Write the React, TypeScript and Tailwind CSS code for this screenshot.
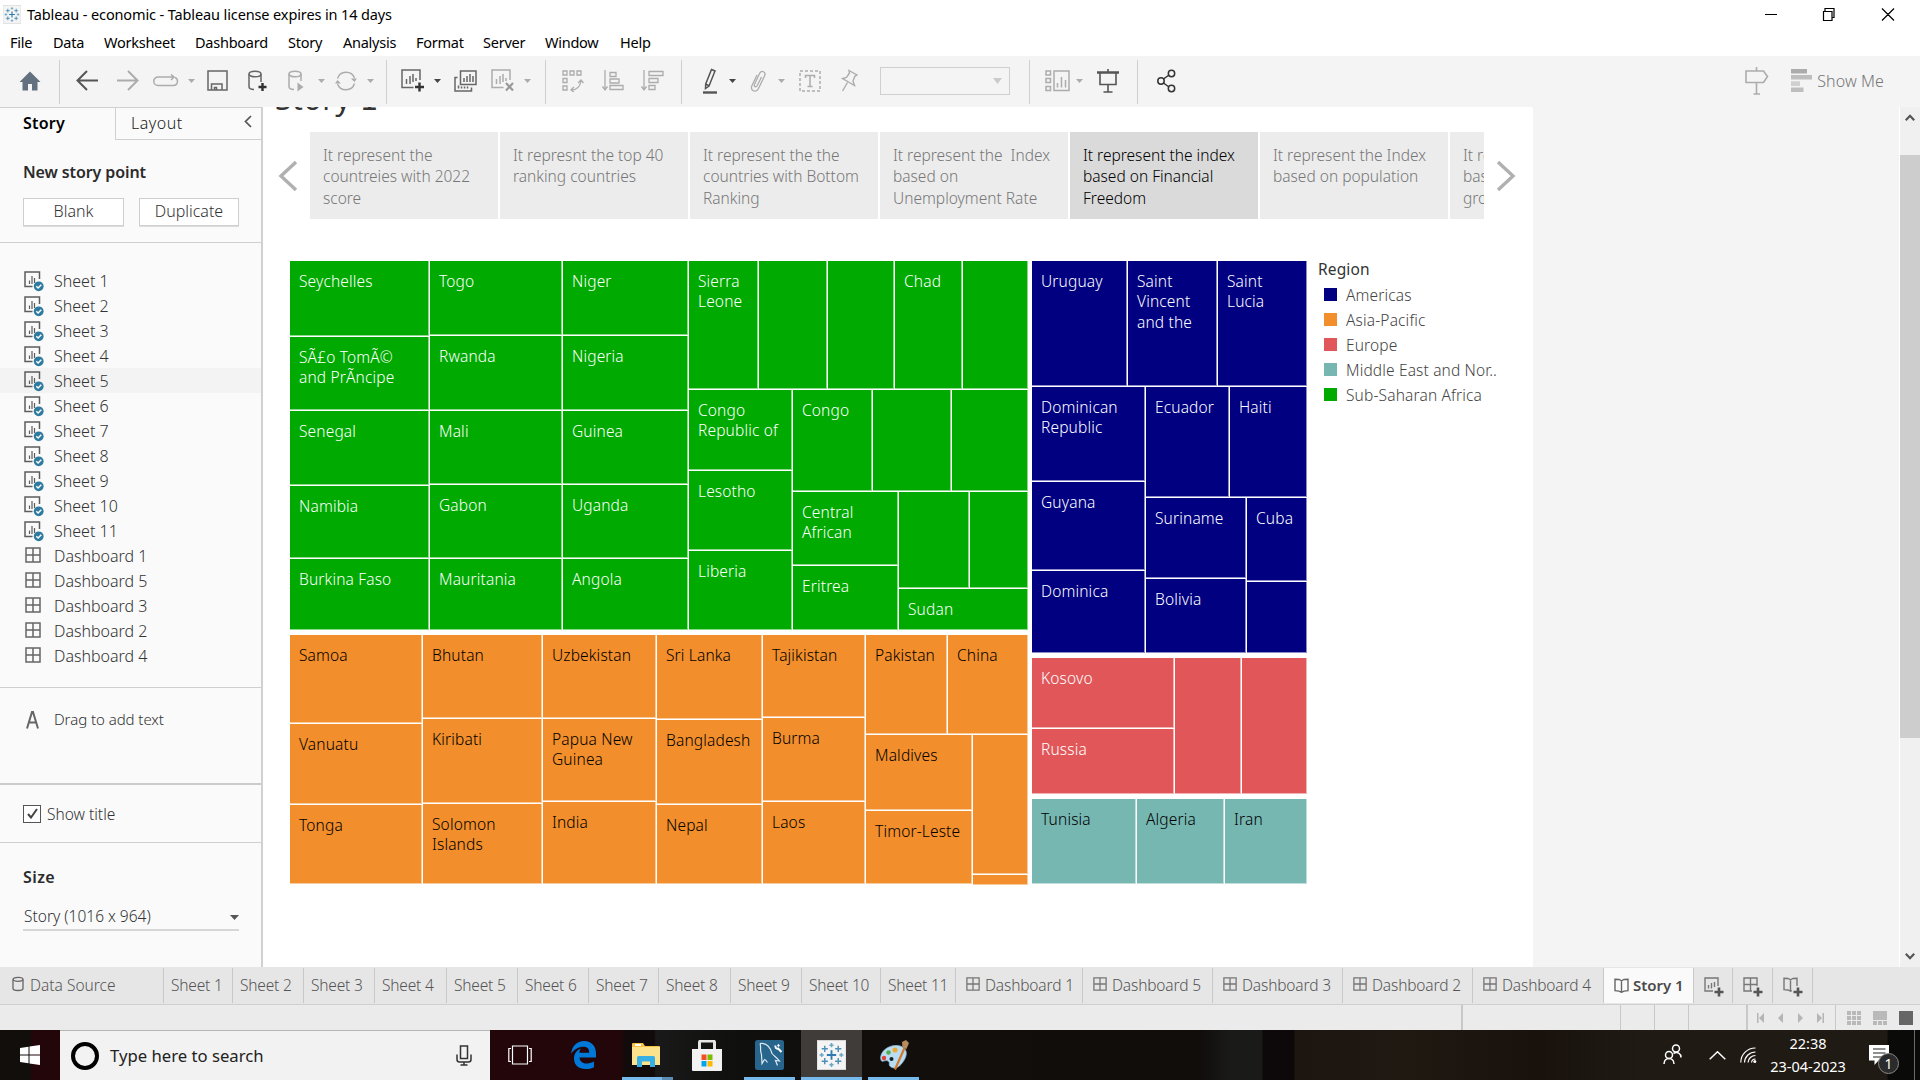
import React from "react";

type Leaf = { s: number; t?: string };
type Branch = { s: number; d: "row" | "col"; c: Node[] };
type Node = Leaf | Branch;

const col = (s: number, c: Node[]): Branch => ({ s, d: "col", c });
const row = (s: number, c: Node[]): Branch => ({ s, d: "row", c });
const l = (s: number, t?: string): Leaf => ({ s, t });

const africa: Node = row(370, [
  col(140, [l(76, "Seychelles"), l(74, "SÃ£o TomÃ©\nand PrÃ­ncipe"), l(75, "Senegal"), l(73, "Namibia"), l(72, "Burkina Faso")]),
  col(133, [l(75, "Togo"), l(75, "Rwanda"), l(74, "Mali"), l(74, "Gabon"), l(72, "Mauritania")]),
  col(126, [l(75, "Niger"), l(75, "Nigeria"), l(74, "Guinea"), l(74, "Uganda"), l(72, "Angola")]),
  col(340, [
    row(129, [l(70, "Sierra\nLeone"), l(69), l(67, ""), l(68, "Chad"), l(66)]),
    row(241, [
      col(104, [l(81, "Congo\nRepublic of"), l(80, "Lesotho"), l(80, "Liberia")]),
      col(236, [
        row(102, [l(80, "Congo"), l(79), l(77)]),
        row(139, [
          col(106, [l(74, "Central\nAfrican"), l(65, "Eritrea")]),
          col(130, [row(97, [l(71), l(59)]), l(42, "Sudan")]),
        ]),
      ]),
    ]),
  ]),
]);

const asia: Node = row(250, [
  col(133, [l(89, "Samoa"), l(81, "Vanuatu"), l(80, "Tonga")]),
  col(120, [l(84, "Bhutan"), l(85, "Kiribati"), l(81, "Solomon\nIslands")]),
  col(114, [l(84, "Uzbekistan"), l(83, "Papua New\nGuinea"), l(83, "India")]),
  col(106, [l(85, "Sri Lanka"), l(85, "Bangladesh"), l(80, "Nepal")]),
  col(103, [l(83, "Tajikistan"), l(84, "Burma"), l(83, "Laos")]),
  col(163, [
    row(100, [l(82, "Pakistan"), l(81, "China")]),
    row(150, [col(107, [l(76, "Maldives"), l(74, "Timor-Leste")]), col(56, [l(140), l(10)])]),
  ]),
]);

const americas: Node = col(393, [
  row(126, [l(96, "Uruguay"), l(90, "Saint\nVincent\nand the"), l(90, "Saint\nLucia")]),
  row(267, [
    col(114, [l(95, "Dominican\nRepublic"), l(89, "Guyana"), l(83, "Dominica")]),
    col(162, [
      row(111, [l(84, "Ecuador"), l(78, "Haiti")]),
      row(156, [col(101, [l(81, "Suriname"), l(75, "Bolivia")]), col(61, [l(84, "Cuba"), l(72)])]),
    ]),
  ]),
]);

const europe: Node = row(137, [col(143, [l(71, "Kosovo"), l(66, "Russia")]), l(67), l(66)]);
const mena: Node = row(86, [l(105, "Tunisia"), l(88, "Algeria"), l(83, "Iran")]);

function Tree({ n, parent, fill }: { n: Node; parent: "row" | "col"; fill: string }) {
  const style = parent === "row" ? { width: n.s } : { height: n.s };
  if ("c" in n) {
    return (
      <div className={`flex shrink-0 ${n.d === "row" ? "flex-row" : "flex-col"}`} style={style}>
        {n.c.map((c, i) => (
          <Tree key={i} n={c} parent={n.d} fill={fill} />
        ))}
      </div>
    );
  }
  return (
    <div
      className={`shrink-0 overflow-hidden whitespace-pre border-t border-l border-white pt-[10px] pl-[9px] text-[15.5px] leading-[20.3px] tracking-[0.15px] shadow-[inset_-1px_-1px_0_rgba(255,255,255,0.55)] ${fill}`}
      style={style}
    >
      {n.t}
    </div>
  );
}

function Ico({ w, h, c, children, vb }: { w: number; h: number; c?: string; children: React.ReactNode; vb?: string }) {
  return (
    <svg width={w} height={h} viewBox={vb ?? `0 0 ${w} ${h}`} fill="none" stroke="currentColor" strokeWidth={1.5} className={`shrink-0 ${c ?? ""}`}>
      {children}
    </svg>
  );
}

const Caret = ({ c }: { c: string }) => (
  <Ico w={7} h={4} c={c}>
    <path d="M0 0h7L3.5 4z" fill="currentColor" stroke="none" />
  </Ico>
);
const VLine = ({ c }: { c: string }) => <div className={`mt-[2px] h-[44px] w-px shrink-0 bg-[#cfcfcf] ${c}`} />;

const SheetIcon = () => (
  <Ico w={20} h={21} c="mt-px text-[#5c5c5c]">
    <path d="M8.5 15.5H1V1h14.5v7" />
    <path d="M5.5 9.5V13M8 5v8M10.5 7v5" strokeWidth={1.2} />
    <circle cx="14.7" cy="15.3" r="4.9" fill="#2e7b9f" stroke="none" />
    <path d="M12.3 15.3l1.8 1.8 3.2-3.4" stroke="#fff" strokeWidth={1.4} />
  </Ico>
);
const DashIcon = ({ s, c }: { s: number; c?: string }) => (
  <Ico w={s} h={s} vb="0 0 16 16" c={c ?? "text-[#666]"}>
    <path d="M1 1h14v14H1zM8 1v14M1 8h14" />
  </Ico>
);
const BookIcon = ({ c }: { c?: string }) => (
  <Ico w={15} h={15} c={c ?? "text-[#666]"}>
    <path d="M1 1.2l4 .3 2.5 1.3L10 1.5l4-.3v11.5l-4 .4-2.5 1.2L5 13.1l-4-.4zM7.5 2.8v11.4" strokeWidth={1.4} />
  </Ico>
);

function Toolbar() {
  return (
    <div className="flex h-[51px] items-center bg-[#f4f4f4] pb-[2px] text-[#acacac]">
      <Ico w={22} h={20} c="ml-[19px] text-[#63707f]">
        <path d="M11 .5L21.5 11H18.5V19.5H13V13H9V19.5H3.5V11H.5z" fill="currentColor" stroke="none" />
      </Ico>
      <VLine c="ml-[18px]" />
      <Ico w={22} h={21} c="ml-[16px] text-[#555]">
        <path d="M11 1L1.5 10.5 11 20M1.5 10.5H22" strokeWidth={2} />
      </Ico>
      <Ico w={22} h={21} c="ml-[19px]">
        <path d="M11 1l9.5 9.5L11 20M20.5 10.5H0" strokeWidth={2} />
      </Ico>
      <Ico w={26} h={14} c="ml-[14px]">
        <path d="M20 3H5a4.2 4.2 0 000 8.5h15c3 0 4.5-2 4.5-4.2S23.5 4 22 3.5M18 .5L21 3l-3 3" />
      </Ico>
      <Caret c="ml-[9px]" />
      <Ico w={21} h={21} c="ml-[12px] text-[#666]">
        <path d="M1 1h19v19H1zM4.500 20v-6h10.500v6M7.500 20v-2.500h2V20" />
      </Ico>
      <Ico w={19} h={22} c="ml-[20px] text-[#666]">
        <path d="M1 4v12.500c0 2 2 3 5 3M13 4v8" />
        <ellipse cx="7" cy="4" rx="6" ry="2.8" />
        <path d="M14.500 13v8M10.500 17h8" stroke="#333" strokeWidth={2.4} />
      </Ico>
      <Ico w={17} h={22} c="ml-[21px]">
        <path d="M1 4v12.500c0 2 2 3 5 3M13 4v7" />
        <ellipse cx="7" cy="4" rx="6" ry="2.8" />
        <path d="M9.500 12.500L15.500 17l-6 4.500z" fill="currentColor" stroke="none" />
      </Ico>
      <Caret c="ml-[13px]" />
      <Ico w={22} h={22} c="ml-[10px]">
        <path d="M2.500 8.500A9 9 0 0119.500 8M19.500 13.500A9 9 0 012.500 14" />
        <path d="M16 8.500h6l-2.500 3.500zM0 13.500h6L2.500 10z" fill="currentColor" stroke="none" />
      </Ico>
      <Caret c="ml-[10px]" />
      <VLine c="ml-[12px]" />
      <Ico w={23} h={23} c="ml-[14px] text-[#666]">
        <path d="M12.500 18.500H1V1h18v10" />
        <path d="M5.500 10v5M9 7v8M12 5v8M15 9v3" />
        <path d="M18.500 13.500v9M14 18h9" stroke="#333" strokeWidth={2.4} />
      </Ico>
      <Caret c="ml-[10px] text-[#444]" />
      <Ico w={23} h={22} c="ml-[13px] text-[#666]">
        <path d="M6.500 1H22v13.500H6.500zM3.500 7.500H1V21h16.500v-3.500" />
        <path d="M10 8v4M13 6v6M16 4v8M19 6v6M4.500 15.500v3M7.500 16.500v2M10.500 16.500v2M13.500 16.500v2" />
      </Ico>
      <Ico w={23} h={23} c="ml-[14px]">
        <path d="M12.500 18.500H1V1h18v10" />
        <path d="M5.500 10v5M9 7v8M12 5v8M15 9v3" />
        <path d="M15 14l7 7.500M22 14l-7 7.500" stroke="#999" strokeWidth={2.2} />
      </Ico>
      <Caret c="ml-[10px]" />
      <VLine c="ml-[14px]" />
      <Ico w={22} h={22} c="ml-[16px]">
        <path d="M1 1h4v4H1zM8 1h4v4H8zM15 1h4v4h-4zM1 8.500h4v4H1zM1 16h4v4H1zM9 20c6 0 9-3 10-9M16 13l3-3 2.500 3M12 17l-3 3 3 2" strokeWidth={1.3} />
      </Ico>
      <Ico w={22} h={22} c="ml-[18px]">
        <path d="M3 0v19M.5 16.500L3 20l2.500-3.500M8 2.500h6v4H8zM8 9h9v4H8zM8 15.500h13v4H8z" strokeWidth={1.3} />
      </Ico>
      <Ico w={23} h={22} c="ml-[17px]">
        <path d="M3 0v19M.5 16.500L3 20l2.500-3.500M8 1.500h14v4H8zM8 8.500h9v4H8zM8 15.500h6v4H8z" strokeWidth={1.3} />
      </Ico>
      <VLine c="ml-[17px]" />
      <Ico w={16} h={26} c="ml-[20px] text-[#555]">
        <path d="M9.500 1.500l3.500 1.500-6 15-3.500 2.500.2-4.500zM3.500 16l3 1.500" />
        <path d="M1 24.500h14" strokeWidth={2.4} />
      </Ico>
      <Caret c="ml-[11px] text-[#444]" />
      <Ico w={16} h={24} c="ml-[14px]">
        <path d="M11.500 8l-4.500 9c-1 1.500-3.500.5-2.500-1.500L9.500 4.500c2-4 7-1.500 5 2.500l-6 12.500c-2.500 5-9 2-6.500-3L7 6" strokeWidth={1.3} />
      </Ico>
      <Caret c="ml-[12px]" />
      <Ico w={22} h={22} c="ml-[14px]">
        <path d="M1 1h20v20H1z" strokeDasharray="3 2" />
        <path d="M6.500 8V5.500h9V8M11 5.500v11M8.500 16.500h5" />
      </Ico>
      <Ico w={17} h={24} c="ml-[20px]">
        <path d="M8 1.500l8 4.500-2 1-2 5 1.500 4.500-6-3.500-6-3.500 4-1L8.500 4zM6.500 13.500L1.500 22" strokeWidth={1.4} />
      </Ico>
      <div className="ml-[22px] flex h-[28px] w-[130px] shrink-0 items-center justify-end border border-[#cfcfcf] pr-[7px] text-[#cbcbcb]">
        <Ico w={9} h={6}>
          <path d="M0 0h9L4.500 6z" fill="currentColor" stroke="none" />
        </Ico>
      </div>
      <VLine c="ml-[19px]" />
      <Ico w={25} h={22} c="ml-[15px]">
        <path d="M1 1h4.500v4H1zM1 8.500h4.500v4H1zM1 16.500h4.500v4H1zM9 1h15v19.500H9z" />
        <path d="M12.500 13v4.500M16.500 7v10.500M20.500 10v7.500" />
      </Ico>
      <Caret c="ml-[6px]" />
      <Ico w={22} h={24} c="ml-[14px] text-[#555]">
        <path d="M0 3.500h22" strokeWidth={2.5} />
        <path d="M11 0v3M3 4v11.500h16V4M11 15.500V23M6.500 23h9" strokeWidth={1.6} />
      </Ico>
      <VLine c="ml-[18px]" />
      <Ico w={19} h={24} c="ml-[19px] text-[#333]">
        <circle cx="4" cy="12" r="3.2" />
        <circle cx="14.500" cy="4.500" r="3.2" />
        <circle cx="14.500" cy="19.500" r="3.2" />
        <path d="M6.500 10l5.500-4M6.500 14l5.500 4" />
      </Ico>
      <Ico w={24} h={28} c="ml-auto">
        <path d="M11.500 0v3.500M11.500 15.500V27M8.500 27h6.500M1 4h17.500l4 5.500-4 6H1z" strokeWidth={1.6} />
      </Ico>
      <Ico w={21} h={23} c="ml-[22px]">
        <g fill="currentColor" stroke="none">
          <path d="M0 0h16v4.500H0z" />
          <path d="M0 6h21v4.500H0z" opacity=".75" />
          <path d="M0 12.300h9V17H0z" opacity=".5" />
          <path d="M0 18.500h12.500V23H0z" opacity=".75" />
        </g>
      </Ico>
      <span className="mr-[36px] ml-[5px] text-[16px] tracking-[0.1px] text-[#777]">Show Me</span>
    </div>
  );
}

const sheets = ["Sheet 1", "Sheet 2", "Sheet 3", "Sheet 4", "Sheet 5", "Sheet 6", "Sheet 7", "Sheet 8", "Sheet 9", "Sheet 10", "Sheet 11"];
const dashes = ["Dashboard 1", "Dashboard 5", "Dashboard 3", "Dashboard 2", "Dashboard 4"];

function Sidebar() {
  return (
    <div className="flex h-[860px] w-[263px] shrink-0 flex-col border-t border-r-2 border-t-[#cfcfcf] border-r-[#d1d1d1] bg-[#fafafa] text-[16px] text-[#333]">
      <div className="flex h-[32px] shrink-0">
        <div className="w-[115px] pl-[23px] text-[16px] leading-[31px] font-semibold tracking-[0.2px] text-black">Story</div>
        <div className="flex flex-1 items-center justify-between border-b border-l border-[#cfcfcf] pr-[9px] pl-[15px] text-[16px] text-[#222]">
          <span className="-mt-px tracking-[0.5px]">Layout</span>
          <Ico w={8} h={13} c="-mt-1 text-[#555]">
            <path d="M7 1L1.500 6.500 7 12" strokeWidth={1.7} />
          </Ico>
        </div>
      </div>
      <div className="h-[103px] shrink-0 border-b border-[#cfcfcf] px-[22px]">
        <div className="mt-[21px] pl-px text-[16px] leading-[22px] font-semibold tracking-[-0.1px] text-[#2b2b2b]">New story point</div>
        <div className="mt-[15px] ml-px flex gap-[15px]">
          <div className="h-[28px] w-[101px] border border-[#cfcfcf] bg-white text-center leading-[25px] shadow-[0_1px_0_#ddd]">Blank</div>
          <div className="h-[28px] w-[100px] border border-[#cfcfcf] bg-white text-center leading-[25px] shadow-[0_1px_0_#ddd]">Duplicate</div>
        </div>
      </div>
      <div className="h-[445px] shrink-0 border-b border-[#cfcfcf] pt-[25px]">
        {sheets.map((s) => (
          <div key={s} className={`flex h-[25px] items-center pl-[24px] ${s === "Sheet 5" ? "bg-[#f3f3f3]" : ""}`}>
            <SheetIcon />
            <span className="ml-[10px]">{s}</span>
          </div>
        ))}
        {dashes.map((s) => (
          <div key={s} className="flex h-[25px] items-center pl-[25px]">
            <DashIcon s={16} c="-mt-[2px] text-[#666]" />
            <span className="ml-[13px]">{s}</span>
          </div>
        ))}
      </div>
      <div className="flex h-[97px] shrink-0 items-start border-b-2 border-[#cbcbcb] pt-[20px] pl-[26px] text-[15px]">
        <Ico w={13} h={18} c="mt-[3px] text-[#666]">
          <path d="M1 17.500L6 1h1l5 16.500M3 11.500h7" strokeWidth={2} />
        </Ico>
        <span className="ml-[15px] tracking-[-0.05px]">Drag to add text</span>
      </div>
      <div className="flex h-[58px] shrink-0 items-center border-b border-[#cfcfcf] pl-[23px]">
        <div className="flex size-[18px] items-center justify-center border border-[#555] bg-white">
          <Ico w={11} h={11} c="text-[#444]">
            <path d="M1 6l3 3.500L10 1" strokeWidth={2} />
          </Ico>
        </div>
        <span className="mt-[2px] ml-[6px] text-[15.5px]">Show title</span>
      </div>
      <div className="px-[22px] pt-[22px]">
        <div className="pl-px leading-[24px] font-semibold tracking-[0.4px] text-[#2b2b2b]">Size</div>
        <div className="mt-[16px] ml-px flex h-[26px] items-center justify-between border-b-2 border-[#d6d6d6] pl-px text-[15.5px]">
          Story (1016 x 964)
          <Ico w={9} h={5}>
            <path d="M0 0h9L4.500 5z" fill="#555" stroke="none" />
          </Ico>
        </div>
      </div>
    </div>
  );
}

const points = [
  "It represent the\ncountreies with 2022\nscore",
  "It represnt the top 40\nranking countries",
  "It represent the the\ncountries with Bottom\nRanking",
  "It represent the  Index\nbased on\nUnemployment Rate",
  "It represent the index\nbased on Financial\nFreedom",
  "It represent the Index\nbased on population",
  "It represent the Index\nbased on GDP\ngrowth rate",
];

const legend = [
  ["Americas", "bg-[#000080]"],
  ["Asia-Pacific", "bg-[#f28e2b]"],
  ["Europe", "bg-[#e15759]"],
  ["Middle East and Nor..", "bg-[#76b7b2]"],
  ["Sub-Saharan Africa", "bg-[#00aa00]"],
];

function StoryCanvas() {
  return (
    <div className="h-[860px] w-[1270px] shrink-0 bg-white">
      <div className="h-[25px] overflow-hidden pl-[12px]">
        <div className="-mt-[30px] text-[30px] leading-[44px] font-normal tracking-[0.6px] text-[#333]">
          Story <span className="font-['DejaVu_Sans']">1</span>
        </div>
      </div>
      <div className="flex h-[87px] items-center">
        <Ico w={20} h={32} c="ml-[15px] text-[#b0b0b0]">
          <path d="M18 2L3 16l15 14" strokeWidth={3.4} />
        </Ico>
        <div className="ml-[12px] flex h-[87px] w-[1174px] gap-[2px] overflow-hidden">
          {points.map((p, i) => (
            <div
              key={i}
              className={`w-[188px] shrink-0 overflow-hidden pt-[12.6px] pl-[13px] text-[15.5px] leading-[21.5px] whitespace-pre ${i === 4 ? "bg-[#dadada] text-black" : "bg-[#ececec] text-[#777]"}`}
            >
              {p}
            </div>
          ))}
        </div>
        <Ico w={20} h={32} c="ml-[12px] text-[#b0b0b0]">
          <path d="M2 2l15 14L2 30" strokeWidth={3.4} />
        </Ico>
      </div>
      <div className="mt-[41px] ml-[26px] flex">
        <div className="flex w-[739px] flex-col gap-[4px] text-white">
          <Tree n={africa} parent="col" fill="bg-[#00aa00] text-white" />
          <Tree n={asia} parent="col" fill="bg-[#f28e2b] text-black" />
        </div>
        <div className="ml-[3px] flex w-[276px] flex-col gap-[4px]">
          <Tree n={americas} parent="col" fill="bg-[#000080] text-white" />
          <Tree n={europe} parent="col" fill="bg-[#e15759] text-white" />
          <Tree n={mena} parent="col" fill="bg-[#76b7b2] text-black" />
        </div>
        <div className="ml-[11px] text-[15.5px] tracking-[0.15px]">
          <div className="h-[22px] leading-[19px] font-normal text-[#333]">Region</div>
          {legend.map(([n, c]) => (
            <div key={n} className="flex h-[25px] items-center pl-[6px]">
              <div className={`size-[13px] ${c}`} />
              <span className="ml-[9px] pt-[3px] tracking-[0.15px] text-[#444]">{n}</span>
            </div>
          ))}
        </div>
      </div>
    </div>
  );
}

const sheetTabW = ["w-[69px]", "w-[71px]", "w-[71px]", "w-[72px]", "w-[71px]", "w-[71px]", "w-[70px]", "w-[72px]", "w-[71px]", "w-[79px]", "w-[75px]"];
const dashTabW = ["w-[127px]", "w-[130px]", "w-[130px]", "w-[130px]", "w-[131px]"];

const Plus = () => <path d="M15 10.500v9M10.500 15h9" stroke="#555" strokeWidth={2.6} />;

function TabBar() {
  const tab = "flex shrink-0 items-center border-r border-[#c8c8c8]";
  return (
    <div className="flex h-[38px] border-b border-[#cfcfcf] bg-[#e6e6e6] pt-px pb-px text-[15.5px] text-[#555]">
      <div className={`${tab} w-[164px] pl-[12px]`}>
        <Ico w={12} h={16} c="-mt-1 text-[#666]">
          <path d="M1 3.500v9c0 1 2 2 5 2s5-1 5-2v-9" strokeWidth={1.3} />
          <ellipse cx="6" cy="3.300" rx="5" ry="2" strokeWidth={1.3} />
        </Ico>
        <span className="mt-px ml-[6px]">Data Source</span>
      </div>
      {sheets.map((s, i) => (
        <div key={s} className={`${tab} ${sheetTabW[i]} pt-px pl-[7px] tracking-[-0.2px]`}>
          {s}
        </div>
      ))}
      {dashes.map((s, i) => (
        <div key={s} className={`${tab} ${dashTabW[i]} pl-[10px]`}>
          <DashIcon s={14} c="text-[#777] -mt-[3px]" />
          <span className="mt-px ml-[5px] tracking-[-0.15px]">{s}</span>
        </div>
      ))}
      <div className={`${tab} w-[90px] bg-[#fafafa] pl-[10px] text-[#4a4a4a]`}>
        <BookIcon />
        <span className="ml-[4px] text-[15px] font-semibold tracking-[-0.05px]">Story 1</span>
      </div>
      <div className={`${tab} w-[39px] pt-[3px] pl-[10px] text-[#777]`}>
        <Ico w={20} h={20}>
          <path d="M9 14H1V1h13v8M4.500 8v3.500M7.500 6v5.500M10.500 5v5" strokeWidth={1.4} />
          <Plus />
        </Ico>
      </div>
      <div className={`${tab} w-[40px] pt-[3px] pl-[10px] text-[#777]`}>
        <Ico w={20} h={20}>
          <path d="M9 14H1V1h13v8M7.500 1v13M1 7.500h13" strokeWidth={1.4} />
          <Plus />
        </Ico>
      </div>
      <div className={`${tab} w-[40px] pt-[3px] pl-[10px] text-[#777]`}>
        <Ico w={20} h={20}>
          <path d="M9 13.500l-1.500.8L5 13l-4-.4V1.200l4 .3 2.500 1.300L10 1.500l4-.3V9M7.500 2.800V14" strokeWidth={1.4} />
          <Plus />
        </Ico>
      </div>
    </div>
  );
}

function StatusBar() {
  const seg = "h-full shrink-0 border-l border-[#c8c8c8]";
  return (
    <div className="flex h-[25px] items-center justify-end bg-[#ebebeb] text-[#b5b5b5]">
      <div className={`${seg} w-[159px] border-l-2`} />
      <div className={`${seg} w-[34px]`} />
      <div className={`${seg} w-[34px]`} />
      <div className={`${seg} w-[58px]`} />
      <div className={`${seg} flex w-[89px] items-center border-l-2 pl-[8px]`}>
        <Ico w={68} h={10}>
          <path d="M1 0h1.500v10H1zM8 0v10L3 5zM27 0v10l-5-5zM42 0v10l5-5zM61 0v10l5-5zM66.500 0H68v10h-1.500z" fill="currentColor" stroke="none" />
        </Ico>
      </div>
      <div className={`${seg} flex w-[85px] items-center gap-[12px] pl-[11px]`}>
        <div className="grid grid-cols-3 gap-px">
          {Array.from({ length: 9 }, (_, i) => (
            <div key={i} className="size-[4px] bg-[#b9b9b9]" />
          ))}
        </div>
        <div className="flex flex-col gap-px">
          <div className="h-[9px] w-[14px] bg-[#b9b9b9]" />
          <div className="flex gap-px">
            <div className="size-[4px] bg-[#b9b9b9]" />
            <div className="size-[4px] bg-[#b9b9b9]" />
            <div className="size-[4px] bg-[#b9b9b9]" />
          </div>
        </div>
        <div className="size-[14px] bg-[#666]" />
      </div>
    </div>
  );
}

const crosses: [number, number, number, string][] = [
  [14, 14, 4.5, "#2f7ab0"],
  [7.5, 8, 3, "#4d8fb8"],
  [20.5, 8, 3, "#4d8fb8"],
  [7.5, 20, 3, "#4d8fb8"],
  [20.5, 20, 3, "#4d8fb8"],
  [14, 4.5, 2, "#6aa5c4"],
  [14, 23.5, 2, "#6aa5c4"],
  [4.5, 14, 2, "#6aa5c4"],
  [23.5, 14, 2, "#6aa5c4"],
];

const TableauLogo = ({ w, h, c }: { w: number; h: number; c?: string }) => (
  <Ico w={w} h={h} vb="0 0 28 28" c={c}>
    <path d="M0 0h28v28H0z" fill="#f4f4f4" stroke="#d5d5d5" strokeWidth={1} />
    {crosses.map(([x, y, r, color], i) => (
      <path key={i} d={`M${x - r} ${y}h${2 * r}M${x} ${y - r}v${2 * r}`} stroke={color} strokeWidth={r > 4 ? 1.8 : 1.4} />
    ))}
  </Ico>
);

function Taskbar() {
  return (
    <div className="flex h-[50px] bg-[linear-gradient(90deg,#120e0b_0,#120e0b_30px,#22060a_32px,#22060a_620px,#120b0b_626px,#120b0b_654px,#191919_656px,#0f0f0e_740px,#110e0b_900px,#100d0b_1200px,#1a1a19_1230px,#1a1a19_1262px,#0d0809_1263px,#0d0809_1294px,#1d1510_1295px,#1f1912_1400px,#19120c_1540px,#1f1a14_1640px,#1f1a14_1887px,#0a0a08_1888px)] text-white">
      <div className="flex w-[60px] items-center justify-center">
        <Ico w={20} h={20}>
          <path d="M0 3l8.500-1.200v7.700H0zM9.500 1.600L20 0v9.500H9.500zM0 10.500h8.500v7.700L0 17zM9.500 10.500H20V20L9.500 18.400z" fill="#fff" stroke="none" />
        </Ico>
      </div>
      <div className="flex w-[430px] items-center border-t border-[#b5b5b5] bg-[#f2f2f2] text-[#222]">
        <div className="ml-[11px] size-[28px] shrink-0 rounded-full border-[4px] border-black" />
        <span className="ml-[11px] text-[16.7px] font-normal">Type here to search</span>
        <Ico w={16} h={21} c="mr-[18px] ml-auto text-[#333]">
          <path d="M4.500 1h7v12.500h-7zM1 9.500v5c0 1.500 1 2.500 2.500 2.500h9c1.500 0 2.500-1 2.500-2.500v-5M8 17v3M4.500 20h7" />
        </Ico>
      </div>
      <div className="flex w-[60px] items-center justify-center">
        <Ico w={24} h={20}>
          <path d="M4.500 1h15v18h-15zM3 3.500H.8v13H3M21 3.500h2.200v13H21" strokeWidth={1.2} />
        </Ico>
      </div>
      <div className="flex w-[67px] items-center justify-center">
        <Ico w={25} h={28} vb="0 0 25 28">
          <path
            d="M0 13C1 5 6 0 13 0c8 0 12 5.500 12 13v3.500H8.500c.3 4 3.500 6 7.500 6 2.800 0 5.200-.8 7-1.900v5.600C20.500 27.500 17.800 28 14.800 28 7.500 28 3 24 3 17.500 3 12.500 6 9.200 9.800 7.500 8.800 8.800 8.500 10.300 8.400 11.800h9.800c0-3.800-1.700-6-5.400-6C7.500 5.800 2.800 8.500 0 13z"
            fill="#0078d7"
            stroke="none"
          />
        </Ico>
      </div>
      <div className="flex w-[57px] flex-col items-center">
        <Ico w={28} h={24} c="mt-[13px]">
          <g stroke="none">
            <path d="M1 0h10l2 3h14a1 1 0 011 1v18H0V1a1 1 0 011-1z" fill="#f5c242" />
            <path d="M0 4h28v18H0z" fill="#fde28c" />
            <path d="M3 1h6v2H3z" fill="#fff" />
            <path d="M5 24V14.500a1.500 1.500 0 011.500-1.500h15a1.500 1.500 0 011.500 1.500V24h-5v-5.500h-8V24z" fill="#38b0e6" />
          </g>
        </Ico>
        <div className="mt-auto ml-[3px] flex h-[3px] w-[51px]">
          <div className="w-[40px] bg-[#76b9ed]" />
          <div className="w-[11px] bg-[#5a8cb4]" />
        </div>
      </div>
      <div className="flex w-[66px] items-center justify-center">
        <Ico w={30} h={31}>
          <path d="M7.500 10V2.500a1.500 1.500 0 011.500-1.500h12a1.500 1.500 0 011.500 1.500V10" stroke="#e6e6e6" strokeWidth={3} />
          <path d="M0 9h30v21a1 1 0 01-1 1H1a1 1 0 01-1-1z" fill="#f2f2f2" stroke="none" />
          <path d="M9.500 14.500h5v5.500h-5z" fill="#f25022" stroke="none" />
          <path d="M15.500 14.500h5v5.500h-5z" fill="#7fba00" stroke="none" />
          <path d="M9.500 21h5v5.500h-5z" fill="#00a4ef" stroke="none" />
          <path d="M15.500 21h5v5.500h-5z" fill="#ffb900" stroke="none" />
        </Ico>
      </div>
      <div className="ml-[4px] flex w-[51px] flex-col items-center">
        <Ico w={29} h={30} c="mt-[10px]">
          <rect width="29" height="30" rx="2.5" fill="#27658c" stroke="none" />
          <path d="M5 3.500c6-1 10 3 12 10 2 2.500 5 4 7.500 7.500l-4-.5 2 5M5 3.500c1.500 3-.5 7 1.500 11l.5 9 2.500-4c1 0 2 1.500 3 3" stroke="#dfe9ef" strokeWidth={1.2} />
          <path d="M20.500 5.500c-.5 2.500 1 3.500 2.500 3l3.500 3.500M23 4.500l1 2" stroke="#fff" strokeWidth={2} />
        </Ico>
        <div className="mt-auto h-[3px] w-full bg-[#76b9ed]" />
      </div>
      <div className="ml-[6px] flex w-[61px] flex-col items-center bg-[#403c3a]">
        <TableauLogo w={29} h={30} c="mt-[10px]" />
        <div className="mt-auto h-[3px] w-full bg-[#76b9ed]" />
      </div>
      <div className="ml-[6px] flex w-[51px] flex-col items-center">
        <Ico w={30} h={30} c="mt-[10px]">
          <path d="M2 20C0 12 9 5 18 5.500s11 7 8 13-8 11-13 9-1-5-4-6.500-6 2-7-1z" fill="#b9dcf2" stroke="#8db8d4" strokeWidth={0.8} />
          <circle cx="12.500" cy="19" r="2" fill="#14202a" stroke="none" />
          <circle cx="5" cy="18" r="2.2" fill="#e0423a" stroke="none" />
          <circle cx="9.500" cy="12.500" r="2.3" fill="#55b04b" stroke="none" />
          <circle cx="16" cy="10" r="2.5" fill="#f2a72e" stroke="none" />
          <path d="M25.500 8L16 29.500" stroke="#d27a2c" strokeWidth={2.2} />
          <path d="M23 2l4-2 3 3-2.500 6-4-1.500z" fill="#b58a5c" stroke="none" />
        </Ico>
        <div className="mt-auto h-[3px] w-full bg-[#76b9ed]" />
      </div>
      <div className="ml-auto flex items-center">
        <Ico w={19} h={21} c="-mt-px">
          <circle cx="13" cy="4.500" r="3.5" />
          <circle cx="6" cy="11" r="3.5" />
          <path d="M1 20c0-7.500 10-7.500 10 0M10.500 9.500c4-2.500 7.500 0 7.500 4" />
        </Ico>
        <Ico w={17} h={9} c="ml-[27px]">
          <path d="M.7 8.300l7.800-7.500 7.800 7.500" />
        </Ico>
        <Ico w={17} h={16} c="ml-[14px]">
          <path d="M.8 15.500A14.500 14.500 0 0115.500 1M4.500 15.500a11 11 0 0111-10.500M8 15.500A7.500 7.500 0 0115.500 8.500M11.500 15.500a4 4 0 014-3.500" strokeWidth={1.2} />
          <circle cx="14.800" cy="14.500" r="1.5" fill="#fff" stroke="none" />
        </Ico>
        <div className="ml-[13px] w-[76px] text-center text-[14.5px] leading-[23px] font-normal">
          22:38
          <br />
          23-04-2023
        </div>
        <div className="relative ml-[23px] h-[32px] w-[31px]">
          <Ico w={20} h={21} c="mt-[6px]">
            <path d="M0 0h20v15.500H9.500L5.500 20v-4.500H0z" fill="#fff" stroke="none" />
            <path d="M4 4h12.500M4 8h12.500M4 12h12.500" stroke="#222" strokeWidth={1.2} />
          </Ico>
          <div className="absolute top-[14px] left-[9px] flex size-[21px] items-center justify-center rounded-full border border-[#888] bg-[#2b2b2b] text-[14px] font-normal">1</div>
        </div>
        <div className="ml-[14px] h-[50px] w-px bg-[#6a6a6a]" />
        <div className="w-[5px]" />
      </div>
    </div>
  );
}

const menus: [string, string][] = [
  ["File", "w-[43px]"],
  ["Data", "w-[51px]"],
  ["Worksheet", "w-[91px]"],
  ["Dashboard", "w-[93px]"],
  ["Story", "w-[55px]"],
  ["Analysis", "w-[73px]"],
  ["Format", "w-[67px]"],
  ["Server", "w-[62px]"],
  ["Window", "w-[75px]"],
  ["Help", "w-[40px]"],
];

export default function App() {
  return (
    <div className="h-[1080px] w-[1920px] overflow-hidden bg-white font-['Noto_Sans',sans-serif] font-light text-black">
      <div className="flex h-[29px] items-center">
        <TableauLogo w={18} h={19} c="ml-[3px]" />
        <span className="ml-[6px] text-[14.5px] font-normal tracking-[-0.12px]">Tableau - economic - Tableau license expires in 14 days</span>
        <Ico w={130} h={13} c="-mt-px mr-[25px] ml-auto">
          <path d="M0 6.500h12M58.500 3.500h8.500v9h-8.500zM60 3.500V.5h9v9h-2M117 .5l12 12M129 .5l-12 12" strokeWidth={1.2} />
        </Ico>
      </div>
      <div className="flex h-[27px] items-center pl-[10px] text-[14.5px] font-normal tracking-[-0.25px]">
        {menus.map(([m, w]) => (
          <span key={m} className={`shrink-0 ${w}`}>
            {m}
          </span>
        ))}
      </div>
      <Toolbar />
      <div className="flex h-[860px]">
        <Sidebar />
        <StoryCanvas />
        <div className="flex-1 bg-[#f4f4f4]" />
        <div className="flex w-[21px] flex-col items-center border-l border-white bg-[#f0f0f0] text-[#555]">
          <Ico w={10} h={7} c="mt-[7px]">
            <path d="M.8 6.200L5 1.800l4.200 4.400" strokeWidth={2.2} />
          </Ico>
          <div className="mt-[34px] h-[583px] w-full bg-[#cdcdcd]" />
          <Ico w={10} h={7} c="mt-auto mb-[7px]">
            <path d="M.8.8L5 5.200 9.200.8" strokeWidth={2.2} />
          </Ico>
        </div>
      </div>
      <TabBar />
      <StatusBar />
      <Taskbar />
    </div>
  );
}
